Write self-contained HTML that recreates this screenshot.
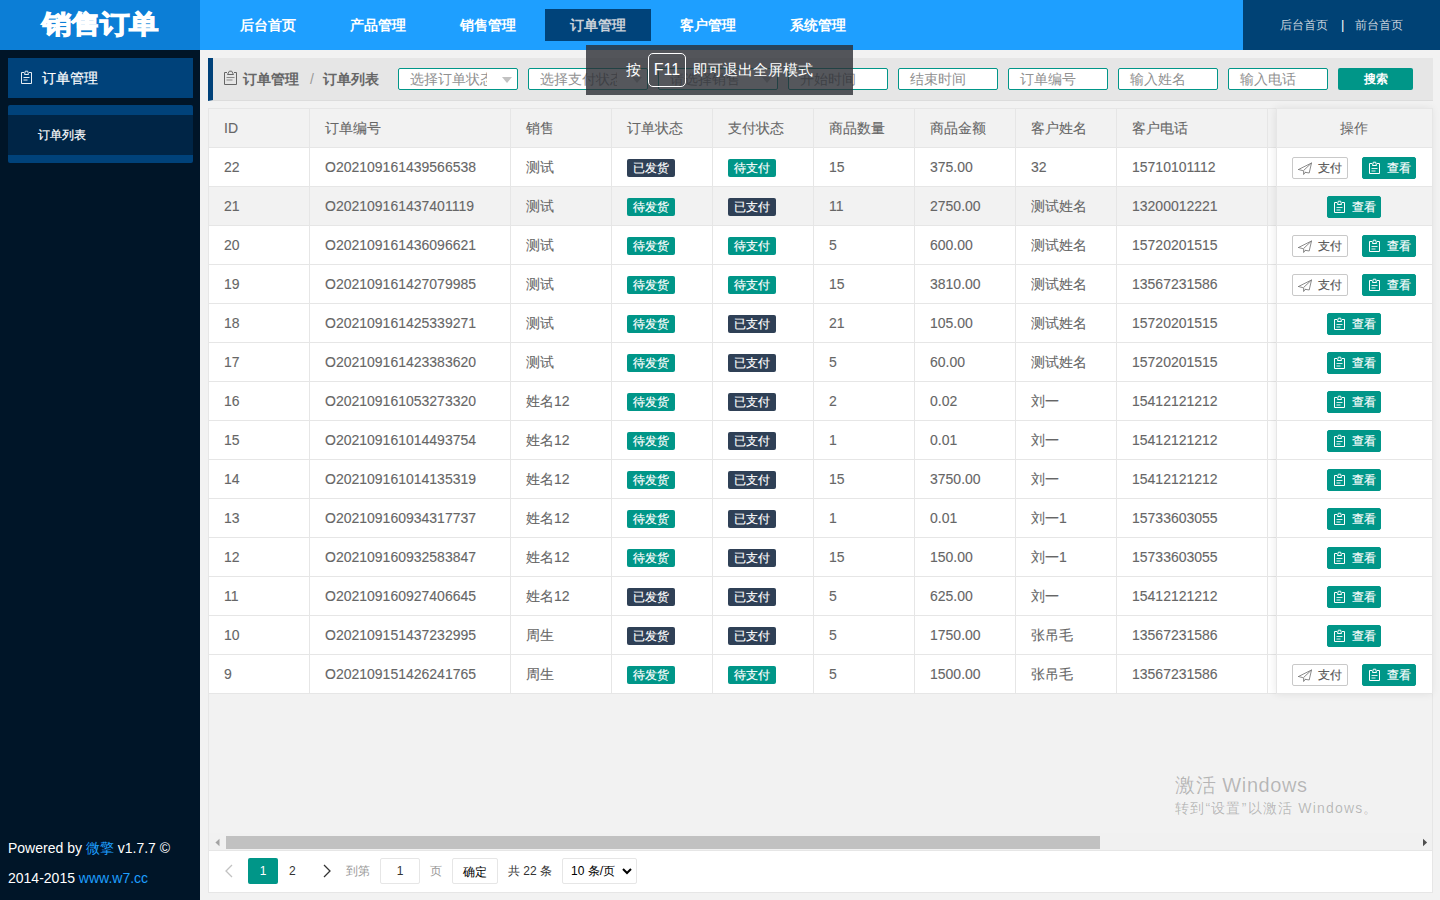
<!DOCTYPE html><html><head><meta charset="utf-8"><style>
*{margin:0;padding:0;box-sizing:border-box}
html,body{width:1440px;height:900px;overflow:hidden;background:#f2f2f2;font-family:"Liberation Sans",sans-serif;font-size:14px;color:#666}
.stk{-webkit-text-stroke:0.3px currentColor}
.abs{position:absolute}
#logo{left:0;top:0;width:200px;height:50px;background:#0c7ed6}
#logot{position:absolute;left:0;top:0;width:200px;height:50px;color:#fff;font-size:29px;font-weight:900;line-height:49px;text-align:center;-webkit-text-stroke:1.2px #fff;transform:scale(1.0,0.88);transform-origin:100px 22px}
#nav{left:200px;top:0;width:1043px;height:50px;background:#1e9fff}
.nv{position:absolute;top:0;height:50px;line-height:50px;color:#fff;font-weight:bold;font-size:14px;white-space:nowrap}
#navact{left:345px;top:9px;width:106px;height:32px;background:#00437a}
#hright{left:1243px;top:0;width:197px;height:50px;background:#004275;color:#c9d3dd;font-size:12px;line-height:50px}
#side{left:0;top:50px;width:200px;height:850px;background:#001528}
.sitem{-webkit-text-stroke:0.2px #fff;position:absolute;left:8px;width:185px;background:#00427a;color:#fff}
#foot{left:8px;top:833px;color:#fff;font-size:14px;line-height:30px;white-space:nowrap}
#foot a{color:#1e9fff;text-decoration:none}
#crumb{left:208px;top:58px;width:1225px;height:43px;background:#e6e6e6;border-left:5px solid #00427a;border-bottom:1px solid #dcdcdc}
.inp{position:absolute;top:68px;height:22px;background:#fff;border:1px solid #009688;border-radius:2px;color:#909090;font-size:14px;line-height:20px;padding-left:11px;white-space:nowrap;overflow:hidden}
.tri{position:absolute;right:5px;top:8px;width:0;height:0;border-left:5.5px solid transparent;border-right:5.5px solid transparent;border-top:6px solid #c2c2c2}
#sbtn{left:1338px;top:68px;width:75px;height:22px;background:#009688;border-radius:2px;color:#fff;font-weight:bold;font-size:12px;line-height:22px;text-align:center}
#tbl{left:208px;top:108px;width:1225px;height:785px;border:1px solid #e6e6e6;background:#f2f2f2}
.row{position:absolute;left:209px;width:1223px;height:38px;background:#fff}
.hline{position:absolute;left:208px;width:1225px;height:1px;background:#e6e6e6}
.vline{position:absolute;width:1px;background:#e6e6e6}
.cell{-webkit-text-stroke:0.1px #666;position:absolute;height:38px;line-height:38px;white-space:nowrap;color:#666;font-size:14px}
.tag{-webkit-text-stroke:0.15px #fff;display:inline-block;height:18px;line-height:18px;padding:0 6px;border-radius:2px;color:#fff;font-size:12px;vertical-align:middle;position:relative;top:0px}
.tg{background:#009688}.td{background:#2f4056}
#fixed{left:1276px;top:108px;width:157px;height:586px;box-shadow:-1px 0 8px rgba(0,0,0,.08)}
.btn{-webkit-text-stroke:0.15px currentColor;position:absolute;top:9px;height:22px;line-height:20px;border-radius:2px;font-size:12px;white-space:nowrap}
.bpay{border:1px solid #c9c9c9;background:#fff;color:#555;width:56px}
.bview{background:#009688;color:#fff;width:54px;border:1px solid #009688}
#pager{left:209px;top:850px;width:1223px;height:42px;background:#fff;border-top:1px solid #e6e6e6}
.pg{position:absolute;top:7px;height:26px;line-height:26px;font-size:12px;white-space:nowrap}
#toast{left:586px;top:45px;width:267px;height:50px;background:rgba(42,45,51,.8);color:#fff;font-size:15px}
#wm{left:1175px;top:772px;color:rgba(0,0,0,.25);white-space:nowrap}
</style></head><body>
<div id="logo" class="abs"><div id="logot">销售订单</div></div>
<div id="nav" class="abs">
<div id="navact" class="abs"></div>
<div class="nv" style="left:40px;color:#fff">后台首页</div>
<div class="nv" style="left:150px;color:#fff">产品管理</div>
<div class="nv" style="left:260px;color:#fff">销售管理</div>
<div class="nv" style="left:370px;color:#c8d0d8">订单管理</div>
<div class="nv" style="left:480px;color:#fff">客户管理</div>
<div class="nv" style="left:590px;color:#fff">系统管理</div>
</div>
<div id="hright" class="abs"><span class="abs" style="left:37px">后台首页</span><span class="abs" style="left:98px;color:#fff;font-size:13px">|</span><span class="abs" style="left:112px">前台首页</span></div>
<div id="side" class="abs">
<div class="sitem" style="top:8px;height:40px;line-height:40px;font-size:14px"><svg style="position:absolute;left:13px;top:14px;overflow:visible" width="11" height="12" viewBox="0 0 11 12"><path d="M3 0.5H0.5V11.5H10.5V0.5H8" fill="none" stroke="#e8eef4" stroke-width="1.0"/><path d="M3.5 2.5L4.3 -0.8H6.7L7.5 2.5Z" fill="none" stroke="#e8eef4" stroke-width="1.0" stroke-linejoin="round"/><path d="M2.5 5.5H8.5M2.5 8H6.5" fill="none" stroke="#e8eef4" stroke-width="1.0"/></svg><span class="abs" style="left:34px">订单管理</span></div>
<div class="sitem" style="top:55px;height:58px;border-radius:2px"><div class="abs" style="left:0;top:10px;width:185px;height:40px;background:#002546"></div><span class="abs" style="left:30px;top:10px;line-height:40px;font-size:12px">订单列表</span></div>
</div>
<div id="foot" class="abs">Powered by <a>微擎</a> v1.7.7 ©<br>2014-2015 <a>www.w7.cc</a></div>
<div id="crumb" class="abs">
<svg style="position:absolute;left:11px;top:14px;overflow:visible" width="13" height="13" viewBox="0 0 13 13"><path d="M3 0.5H0.5V12.5H12.5V0.5H10" fill="none" stroke="#666" stroke-width="1.0"/><path d="M3.5 2.5L5.3 -0.8H7.7L9.5 2.5Z" fill="none" stroke="#666" stroke-width="1.0" stroke-linejoin="round"/><path d="M2.5 5.5H10.5M2.5 8H8.5" fill="none" stroke="#888" stroke-width="1.0"/></svg>
<span class="abs" style="left:30px;top:0;line-height:42px;font-weight:bold;color:#666">订单管理</span>
<span class="abs" style="left:97px;top:0;line-height:42px;color:#999">/</span>
<span class="abs" style="left:110px;top:0;line-height:42px;font-weight:bold;color:#666">订单列表</span>
</div>
<div class="inp" style="left:398px;width:120px"><span class="abs" style="left:11px;width:77px;overflow:hidden">选择订单状态</span><i class="tri"></i></div>
<div class="inp" style="left:528px;width:120px"><span class="abs" style="left:11px;width:77px;overflow:hidden">选择支付状态</span><i class="tri"></i></div>
<div class="inp" style="left:658px;width:120px"><span class="abs" style="left:11px;width:77px;overflow:hidden">请选择销售</span><i class="tri"></i></div>
<div class="inp" style="left:788px;width:100px">开始时间</div>
<div class="inp" style="left:898px;width:100px">结束时间</div>
<div class="inp" style="left:1008px;width:100px">订单编号</div>
<div class="inp" style="left:1118px;width:100px">输入姓名</div>
<div class="inp" style="left:1228px;width:100px">输入电话</div>
<div id="sbtn" class="abs">搜索</div>
<div id="tbl" class="abs"></div>
<div class="row" style="top:109px;background:#f2f2f2"></div>
<div class="row" style="top:148px;background:#fff"></div>
<div class="row" style="top:187px;background:#f2f2f2"></div>
<div class="row" style="top:226px;background:#fff"></div>
<div class="row" style="top:265px;background:#fff"></div>
<div class="row" style="top:304px;background:#fff"></div>
<div class="row" style="top:343px;background:#fff"></div>
<div class="row" style="top:382px;background:#fff"></div>
<div class="row" style="top:421px;background:#fff"></div>
<div class="row" style="top:460px;background:#fff"></div>
<div class="row" style="top:499px;background:#fff"></div>
<div class="row" style="top:538px;background:#fff"></div>
<div class="row" style="top:577px;background:#fff"></div>
<div class="row" style="top:616px;background:#fff"></div>
<div class="row" style="top:655px;background:#fff"></div>
<div class="hline" style="top:147px"></div>
<div class="hline" style="top:186px"></div>
<div class="hline" style="top:225px"></div>
<div class="hline" style="top:264px"></div>
<div class="hline" style="top:303px"></div>
<div class="hline" style="top:342px"></div>
<div class="hline" style="top:381px"></div>
<div class="hline" style="top:420px"></div>
<div class="hline" style="top:459px"></div>
<div class="hline" style="top:498px"></div>
<div class="hline" style="top:537px"></div>
<div class="hline" style="top:576px"></div>
<div class="hline" style="top:615px"></div>
<div class="hline" style="top:654px"></div>
<div class="hline" style="top:693px"></div>
<div class="vline" style="left:309px;top:108px;height:586px"></div>
<div class="vline" style="left:510px;top:108px;height:586px"></div>
<div class="vline" style="left:611px;top:108px;height:586px"></div>
<div class="vline" style="left:712px;top:108px;height:586px"></div>
<div class="vline" style="left:813px;top:108px;height:586px"></div>
<div class="vline" style="left:914px;top:108px;height:586px"></div>
<div class="vline" style="left:1015px;top:108px;height:586px"></div>
<div class="vline" style="left:1116px;top:108px;height:586px"></div>
<div class="vline" style="left:1267px;top:108px;height:586px"></div>
<div class="cell" style="left:224px;top:109px">ID</div>
<div class="cell" style="left:325px;top:109px">订单编号</div>
<div class="cell" style="left:526px;top:109px">销售</div>
<div class="cell" style="left:627px;top:109px">订单状态</div>
<div class="cell" style="left:728px;top:109px">支付状态</div>
<div class="cell" style="left:829px;top:109px">商品数量</div>
<div class="cell" style="left:930px;top:109px">商品金额</div>
<div class="cell" style="left:1031px;top:109px">客户姓名</div>
<div class="cell" style="left:1132px;top:109px">客户电话</div>
<div class="cell" style="left:224px;top:148px">22</div>
<div class="cell" style="left:325px;top:148px">O202109161439566538</div>
<div class="cell" style="left:526px;top:148px">测试</div>
<div class="cell" style="left:627px;top:148px"><span class="tag td">已发货</span></div>
<div class="cell" style="left:728px;top:148px"><span class="tag tg">待支付</span></div>
<div class="cell" style="left:829px;top:148px">15</div>
<div class="cell" style="left:930px;top:148px">375.00</div>
<div class="cell" style="left:1031px;top:148px">32</div>
<div class="cell" style="left:1132px;top:148px">15710101112</div>
<div class="cell" style="left:224px;top:187px">21</div>
<div class="cell" style="left:325px;top:187px">O202109161437401119</div>
<div class="cell" style="left:526px;top:187px">测试</div>
<div class="cell" style="left:627px;top:187px"><span class="tag tg">待发货</span></div>
<div class="cell" style="left:728px;top:187px"><span class="tag td">已支付</span></div>
<div class="cell" style="left:829px;top:187px">11</div>
<div class="cell" style="left:930px;top:187px">2750.00</div>
<div class="cell" style="left:1031px;top:187px">测试姓名</div>
<div class="cell" style="left:1132px;top:187px">13200012221</div>
<div class="cell" style="left:224px;top:226px">20</div>
<div class="cell" style="left:325px;top:226px">O202109161436096621</div>
<div class="cell" style="left:526px;top:226px">测试</div>
<div class="cell" style="left:627px;top:226px"><span class="tag tg">待发货</span></div>
<div class="cell" style="left:728px;top:226px"><span class="tag tg">待支付</span></div>
<div class="cell" style="left:829px;top:226px">5</div>
<div class="cell" style="left:930px;top:226px">600.00</div>
<div class="cell" style="left:1031px;top:226px">测试姓名</div>
<div class="cell" style="left:1132px;top:226px">15720201515</div>
<div class="cell" style="left:224px;top:265px">19</div>
<div class="cell" style="left:325px;top:265px">O202109161427079985</div>
<div class="cell" style="left:526px;top:265px">测试</div>
<div class="cell" style="left:627px;top:265px"><span class="tag tg">待发货</span></div>
<div class="cell" style="left:728px;top:265px"><span class="tag tg">待支付</span></div>
<div class="cell" style="left:829px;top:265px">15</div>
<div class="cell" style="left:930px;top:265px">3810.00</div>
<div class="cell" style="left:1031px;top:265px">测试姓名</div>
<div class="cell" style="left:1132px;top:265px">13567231586</div>
<div class="cell" style="left:224px;top:304px">18</div>
<div class="cell" style="left:325px;top:304px">O202109161425339271</div>
<div class="cell" style="left:526px;top:304px">测试</div>
<div class="cell" style="left:627px;top:304px"><span class="tag tg">待发货</span></div>
<div class="cell" style="left:728px;top:304px"><span class="tag td">已支付</span></div>
<div class="cell" style="left:829px;top:304px">21</div>
<div class="cell" style="left:930px;top:304px">105.00</div>
<div class="cell" style="left:1031px;top:304px">测试姓名</div>
<div class="cell" style="left:1132px;top:304px">15720201515</div>
<div class="cell" style="left:224px;top:343px">17</div>
<div class="cell" style="left:325px;top:343px">O202109161423383620</div>
<div class="cell" style="left:526px;top:343px">测试</div>
<div class="cell" style="left:627px;top:343px"><span class="tag tg">待发货</span></div>
<div class="cell" style="left:728px;top:343px"><span class="tag td">已支付</span></div>
<div class="cell" style="left:829px;top:343px">5</div>
<div class="cell" style="left:930px;top:343px">60.00</div>
<div class="cell" style="left:1031px;top:343px">测试姓名</div>
<div class="cell" style="left:1132px;top:343px">15720201515</div>
<div class="cell" style="left:224px;top:382px">16</div>
<div class="cell" style="left:325px;top:382px">O202109161053273320</div>
<div class="cell" style="left:526px;top:382px">姓名12</div>
<div class="cell" style="left:627px;top:382px"><span class="tag tg">待发货</span></div>
<div class="cell" style="left:728px;top:382px"><span class="tag td">已支付</span></div>
<div class="cell" style="left:829px;top:382px">2</div>
<div class="cell" style="left:930px;top:382px">0.02</div>
<div class="cell" style="left:1031px;top:382px">刘一</div>
<div class="cell" style="left:1132px;top:382px">15412121212</div>
<div class="cell" style="left:224px;top:421px">15</div>
<div class="cell" style="left:325px;top:421px">O202109161014493754</div>
<div class="cell" style="left:526px;top:421px">姓名12</div>
<div class="cell" style="left:627px;top:421px"><span class="tag tg">待发货</span></div>
<div class="cell" style="left:728px;top:421px"><span class="tag td">已支付</span></div>
<div class="cell" style="left:829px;top:421px">1</div>
<div class="cell" style="left:930px;top:421px">0.01</div>
<div class="cell" style="left:1031px;top:421px">刘一</div>
<div class="cell" style="left:1132px;top:421px">15412121212</div>
<div class="cell" style="left:224px;top:460px">14</div>
<div class="cell" style="left:325px;top:460px">O202109161014135319</div>
<div class="cell" style="left:526px;top:460px">姓名12</div>
<div class="cell" style="left:627px;top:460px"><span class="tag tg">待发货</span></div>
<div class="cell" style="left:728px;top:460px"><span class="tag td">已支付</span></div>
<div class="cell" style="left:829px;top:460px">15</div>
<div class="cell" style="left:930px;top:460px">3750.00</div>
<div class="cell" style="left:1031px;top:460px">刘一</div>
<div class="cell" style="left:1132px;top:460px">15412121212</div>
<div class="cell" style="left:224px;top:499px">13</div>
<div class="cell" style="left:325px;top:499px">O202109160934317737</div>
<div class="cell" style="left:526px;top:499px">姓名12</div>
<div class="cell" style="left:627px;top:499px"><span class="tag tg">待发货</span></div>
<div class="cell" style="left:728px;top:499px"><span class="tag td">已支付</span></div>
<div class="cell" style="left:829px;top:499px">1</div>
<div class="cell" style="left:930px;top:499px">0.01</div>
<div class="cell" style="left:1031px;top:499px">刘一1</div>
<div class="cell" style="left:1132px;top:499px">15733603055</div>
<div class="cell" style="left:224px;top:538px">12</div>
<div class="cell" style="left:325px;top:538px">O202109160932583847</div>
<div class="cell" style="left:526px;top:538px">姓名12</div>
<div class="cell" style="left:627px;top:538px"><span class="tag tg">待发货</span></div>
<div class="cell" style="left:728px;top:538px"><span class="tag td">已支付</span></div>
<div class="cell" style="left:829px;top:538px">15</div>
<div class="cell" style="left:930px;top:538px">150.00</div>
<div class="cell" style="left:1031px;top:538px">刘一1</div>
<div class="cell" style="left:1132px;top:538px">15733603055</div>
<div class="cell" style="left:224px;top:577px">11</div>
<div class="cell" style="left:325px;top:577px">O202109160927406645</div>
<div class="cell" style="left:526px;top:577px">姓名12</div>
<div class="cell" style="left:627px;top:577px"><span class="tag td">已发货</span></div>
<div class="cell" style="left:728px;top:577px"><span class="tag td">已支付</span></div>
<div class="cell" style="left:829px;top:577px">5</div>
<div class="cell" style="left:930px;top:577px">625.00</div>
<div class="cell" style="left:1031px;top:577px">刘一</div>
<div class="cell" style="left:1132px;top:577px">15412121212</div>
<div class="cell" style="left:224px;top:616px">10</div>
<div class="cell" style="left:325px;top:616px">O202109151437232995</div>
<div class="cell" style="left:526px;top:616px">周生</div>
<div class="cell" style="left:627px;top:616px"><span class="tag td">已发货</span></div>
<div class="cell" style="left:728px;top:616px"><span class="tag td">已支付</span></div>
<div class="cell" style="left:829px;top:616px">5</div>
<div class="cell" style="left:930px;top:616px">1750.00</div>
<div class="cell" style="left:1031px;top:616px">张吊毛</div>
<div class="cell" style="left:1132px;top:616px">13567231586</div>
<div class="cell" style="left:224px;top:655px">9</div>
<div class="cell" style="left:325px;top:655px">O202109151426241765</div>
<div class="cell" style="left:526px;top:655px">周生</div>
<div class="cell" style="left:627px;top:655px"><span class="tag tg">待发货</span></div>
<div class="cell" style="left:728px;top:655px"><span class="tag tg">待支付</span></div>
<div class="cell" style="left:829px;top:655px">5</div>
<div class="cell" style="left:930px;top:655px">1500.00</div>
<div class="cell" style="left:1031px;top:655px">张吊毛</div>
<div class="cell" style="left:1132px;top:655px">13567231586</div>
<div id="fixed" class="abs">
<div class="abs" style="left:0;top:1px;width:156px;height:38px;background:#f2f2f2;border-left:1px solid #e6e6e6"></div>
<div class="abs" style="left:0;top:8px;width:156px;line-height:24px;text-align:center;font-size:14px;color:#666">操作</div>
<div class="abs" style="left:0;top:40px;width:156px;height:38px;background:#fff;border-left:1px solid #e6e6e6">
<div class="btn bpay" style="left:15px"><svg style="position:absolute;left:1px;top:0px;overflow:visible" width="20" height="20" viewBox="0 0 20 20"><path d="M4.5 11.5L17.5 5L15.2 15L11.2 14.3M4.5 11.5L8.6 12.6M17.5 5L9.6 12.5V16.5L11.4 14.3" fill="none" stroke="#777" stroke-width="0.85" stroke-linejoin="round" stroke-linecap="round"/></svg><span class="abs" style="left:25px;top:0">支付</span></div>
<div class="btn bview" style="left:85px"><svg style="position:absolute;left:6px;top:5px;overflow:visible" width="11" height="11" viewBox="0 0 11 11"><path d="M3 0.5H0.5V10.5H10.5V0.5H8" fill="none" stroke="#fff" stroke-width="1.0"/><path d="M3.5 2.5L4.3 -0.8H6.7L7.5 2.5Z" fill="none" stroke="#fff" stroke-width="1.0" stroke-linejoin="round"/><path d="M2.5 5.5H8.5M2.5 8H6.5" fill="none" stroke="#e0f0ee" stroke-width="1.0"/></svg><span class="abs" style="left:24px;top:0">查看</span></div>
</div>
<div class="abs" style="left:0;top:78px;width:156px;height:1px;background:#e6e6e6"></div>
<div class="abs" style="left:0;top:79px;width:156px;height:38px;background:#f2f2f2;border-left:1px solid #e6e6e6">
<div class="btn bview" style="left:50px"><svg style="position:absolute;left:6px;top:5px;overflow:visible" width="11" height="11" viewBox="0 0 11 11"><path d="M3 0.5H0.5V10.5H10.5V0.5H8" fill="none" stroke="#fff" stroke-width="1.0"/><path d="M3.5 2.5L4.3 -0.8H6.7L7.5 2.5Z" fill="none" stroke="#fff" stroke-width="1.0" stroke-linejoin="round"/><path d="M2.5 5.5H8.5M2.5 8H6.5" fill="none" stroke="#e0f0ee" stroke-width="1.0"/></svg><span class="abs" style="left:24px;top:0">查看</span></div>
</div>
<div class="abs" style="left:0;top:117px;width:156px;height:1px;background:#e6e6e6"></div>
<div class="abs" style="left:0;top:118px;width:156px;height:38px;background:#fff;border-left:1px solid #e6e6e6">
<div class="btn bpay" style="left:15px"><svg style="position:absolute;left:1px;top:0px;overflow:visible" width="20" height="20" viewBox="0 0 20 20"><path d="M4.5 11.5L17.5 5L15.2 15L11.2 14.3M4.5 11.5L8.6 12.6M17.5 5L9.6 12.5V16.5L11.4 14.3" fill="none" stroke="#777" stroke-width="0.85" stroke-linejoin="round" stroke-linecap="round"/></svg><span class="abs" style="left:25px;top:0">支付</span></div>
<div class="btn bview" style="left:85px"><svg style="position:absolute;left:6px;top:5px;overflow:visible" width="11" height="11" viewBox="0 0 11 11"><path d="M3 0.5H0.5V10.5H10.5V0.5H8" fill="none" stroke="#fff" stroke-width="1.0"/><path d="M3.5 2.5L4.3 -0.8H6.7L7.5 2.5Z" fill="none" stroke="#fff" stroke-width="1.0" stroke-linejoin="round"/><path d="M2.5 5.5H8.5M2.5 8H6.5" fill="none" stroke="#e0f0ee" stroke-width="1.0"/></svg><span class="abs" style="left:24px;top:0">查看</span></div>
</div>
<div class="abs" style="left:0;top:156px;width:156px;height:1px;background:#e6e6e6"></div>
<div class="abs" style="left:0;top:157px;width:156px;height:38px;background:#fff;border-left:1px solid #e6e6e6">
<div class="btn bpay" style="left:15px"><svg style="position:absolute;left:1px;top:0px;overflow:visible" width="20" height="20" viewBox="0 0 20 20"><path d="M4.5 11.5L17.5 5L15.2 15L11.2 14.3M4.5 11.5L8.6 12.6M17.5 5L9.6 12.5V16.5L11.4 14.3" fill="none" stroke="#777" stroke-width="0.85" stroke-linejoin="round" stroke-linecap="round"/></svg><span class="abs" style="left:25px;top:0">支付</span></div>
<div class="btn bview" style="left:85px"><svg style="position:absolute;left:6px;top:5px;overflow:visible" width="11" height="11" viewBox="0 0 11 11"><path d="M3 0.5H0.5V10.5H10.5V0.5H8" fill="none" stroke="#fff" stroke-width="1.0"/><path d="M3.5 2.5L4.3 -0.8H6.7L7.5 2.5Z" fill="none" stroke="#fff" stroke-width="1.0" stroke-linejoin="round"/><path d="M2.5 5.5H8.5M2.5 8H6.5" fill="none" stroke="#e0f0ee" stroke-width="1.0"/></svg><span class="abs" style="left:24px;top:0">查看</span></div>
</div>
<div class="abs" style="left:0;top:195px;width:156px;height:1px;background:#e6e6e6"></div>
<div class="abs" style="left:0;top:196px;width:156px;height:38px;background:#fff;border-left:1px solid #e6e6e6">
<div class="btn bview" style="left:50px"><svg style="position:absolute;left:6px;top:5px;overflow:visible" width="11" height="11" viewBox="0 0 11 11"><path d="M3 0.5H0.5V10.5H10.5V0.5H8" fill="none" stroke="#fff" stroke-width="1.0"/><path d="M3.5 2.5L4.3 -0.8H6.7L7.5 2.5Z" fill="none" stroke="#fff" stroke-width="1.0" stroke-linejoin="round"/><path d="M2.5 5.5H8.5M2.5 8H6.5" fill="none" stroke="#e0f0ee" stroke-width="1.0"/></svg><span class="abs" style="left:24px;top:0">查看</span></div>
</div>
<div class="abs" style="left:0;top:234px;width:156px;height:1px;background:#e6e6e6"></div>
<div class="abs" style="left:0;top:235px;width:156px;height:38px;background:#fff;border-left:1px solid #e6e6e6">
<div class="btn bview" style="left:50px"><svg style="position:absolute;left:6px;top:5px;overflow:visible" width="11" height="11" viewBox="0 0 11 11"><path d="M3 0.5H0.5V10.5H10.5V0.5H8" fill="none" stroke="#fff" stroke-width="1.0"/><path d="M3.5 2.5L4.3 -0.8H6.7L7.5 2.5Z" fill="none" stroke="#fff" stroke-width="1.0" stroke-linejoin="round"/><path d="M2.5 5.5H8.5M2.5 8H6.5" fill="none" stroke="#e0f0ee" stroke-width="1.0"/></svg><span class="abs" style="left:24px;top:0">查看</span></div>
</div>
<div class="abs" style="left:0;top:273px;width:156px;height:1px;background:#e6e6e6"></div>
<div class="abs" style="left:0;top:274px;width:156px;height:38px;background:#fff;border-left:1px solid #e6e6e6">
<div class="btn bview" style="left:50px"><svg style="position:absolute;left:6px;top:5px;overflow:visible" width="11" height="11" viewBox="0 0 11 11"><path d="M3 0.5H0.5V10.5H10.5V0.5H8" fill="none" stroke="#fff" stroke-width="1.0"/><path d="M3.5 2.5L4.3 -0.8H6.7L7.5 2.5Z" fill="none" stroke="#fff" stroke-width="1.0" stroke-linejoin="round"/><path d="M2.5 5.5H8.5M2.5 8H6.5" fill="none" stroke="#e0f0ee" stroke-width="1.0"/></svg><span class="abs" style="left:24px;top:0">查看</span></div>
</div>
<div class="abs" style="left:0;top:312px;width:156px;height:1px;background:#e6e6e6"></div>
<div class="abs" style="left:0;top:313px;width:156px;height:38px;background:#fff;border-left:1px solid #e6e6e6">
<div class="btn bview" style="left:50px"><svg style="position:absolute;left:6px;top:5px;overflow:visible" width="11" height="11" viewBox="0 0 11 11"><path d="M3 0.5H0.5V10.5H10.5V0.5H8" fill="none" stroke="#fff" stroke-width="1.0"/><path d="M3.5 2.5L4.3 -0.8H6.7L7.5 2.5Z" fill="none" stroke="#fff" stroke-width="1.0" stroke-linejoin="round"/><path d="M2.5 5.5H8.5M2.5 8H6.5" fill="none" stroke="#e0f0ee" stroke-width="1.0"/></svg><span class="abs" style="left:24px;top:0">查看</span></div>
</div>
<div class="abs" style="left:0;top:351px;width:156px;height:1px;background:#e6e6e6"></div>
<div class="abs" style="left:0;top:352px;width:156px;height:38px;background:#fff;border-left:1px solid #e6e6e6">
<div class="btn bview" style="left:50px"><svg style="position:absolute;left:6px;top:5px;overflow:visible" width="11" height="11" viewBox="0 0 11 11"><path d="M3 0.5H0.5V10.5H10.5V0.5H8" fill="none" stroke="#fff" stroke-width="1.0"/><path d="M3.5 2.5L4.3 -0.8H6.7L7.5 2.5Z" fill="none" stroke="#fff" stroke-width="1.0" stroke-linejoin="round"/><path d="M2.5 5.5H8.5M2.5 8H6.5" fill="none" stroke="#e0f0ee" stroke-width="1.0"/></svg><span class="abs" style="left:24px;top:0">查看</span></div>
</div>
<div class="abs" style="left:0;top:390px;width:156px;height:1px;background:#e6e6e6"></div>
<div class="abs" style="left:0;top:391px;width:156px;height:38px;background:#fff;border-left:1px solid #e6e6e6">
<div class="btn bview" style="left:50px"><svg style="position:absolute;left:6px;top:5px;overflow:visible" width="11" height="11" viewBox="0 0 11 11"><path d="M3 0.5H0.5V10.5H10.5V0.5H8" fill="none" stroke="#fff" stroke-width="1.0"/><path d="M3.5 2.5L4.3 -0.8H6.7L7.5 2.5Z" fill="none" stroke="#fff" stroke-width="1.0" stroke-linejoin="round"/><path d="M2.5 5.5H8.5M2.5 8H6.5" fill="none" stroke="#e0f0ee" stroke-width="1.0"/></svg><span class="abs" style="left:24px;top:0">查看</span></div>
</div>
<div class="abs" style="left:0;top:429px;width:156px;height:1px;background:#e6e6e6"></div>
<div class="abs" style="left:0;top:430px;width:156px;height:38px;background:#fff;border-left:1px solid #e6e6e6">
<div class="btn bview" style="left:50px"><svg style="position:absolute;left:6px;top:5px;overflow:visible" width="11" height="11" viewBox="0 0 11 11"><path d="M3 0.5H0.5V10.5H10.5V0.5H8" fill="none" stroke="#fff" stroke-width="1.0"/><path d="M3.5 2.5L4.3 -0.8H6.7L7.5 2.5Z" fill="none" stroke="#fff" stroke-width="1.0" stroke-linejoin="round"/><path d="M2.5 5.5H8.5M2.5 8H6.5" fill="none" stroke="#e0f0ee" stroke-width="1.0"/></svg><span class="abs" style="left:24px;top:0">查看</span></div>
</div>
<div class="abs" style="left:0;top:468px;width:156px;height:1px;background:#e6e6e6"></div>
<div class="abs" style="left:0;top:469px;width:156px;height:38px;background:#fff;border-left:1px solid #e6e6e6">
<div class="btn bview" style="left:50px"><svg style="position:absolute;left:6px;top:5px;overflow:visible" width="11" height="11" viewBox="0 0 11 11"><path d="M3 0.5H0.5V10.5H10.5V0.5H8" fill="none" stroke="#fff" stroke-width="1.0"/><path d="M3.5 2.5L4.3 -0.8H6.7L7.5 2.5Z" fill="none" stroke="#fff" stroke-width="1.0" stroke-linejoin="round"/><path d="M2.5 5.5H8.5M2.5 8H6.5" fill="none" stroke="#e0f0ee" stroke-width="1.0"/></svg><span class="abs" style="left:24px;top:0">查看</span></div>
</div>
<div class="abs" style="left:0;top:507px;width:156px;height:1px;background:#e6e6e6"></div>
<div class="abs" style="left:0;top:508px;width:156px;height:38px;background:#fff;border-left:1px solid #e6e6e6">
<div class="btn bview" style="left:50px"><svg style="position:absolute;left:6px;top:5px;overflow:visible" width="11" height="11" viewBox="0 0 11 11"><path d="M3 0.5H0.5V10.5H10.5V0.5H8" fill="none" stroke="#fff" stroke-width="1.0"/><path d="M3.5 2.5L4.3 -0.8H6.7L7.5 2.5Z" fill="none" stroke="#fff" stroke-width="1.0" stroke-linejoin="round"/><path d="M2.5 5.5H8.5M2.5 8H6.5" fill="none" stroke="#e0f0ee" stroke-width="1.0"/></svg><span class="abs" style="left:24px;top:0">查看</span></div>
</div>
<div class="abs" style="left:0;top:546px;width:156px;height:1px;background:#e6e6e6"></div>
<div class="abs" style="left:0;top:547px;width:156px;height:38px;background:#fff;border-left:1px solid #e6e6e6">
<div class="btn bpay" style="left:15px"><svg style="position:absolute;left:1px;top:0px;overflow:visible" width="20" height="20" viewBox="0 0 20 20"><path d="M4.5 11.5L17.5 5L15.2 15L11.2 14.3M4.5 11.5L8.6 12.6M17.5 5L9.6 12.5V16.5L11.4 14.3" fill="none" stroke="#777" stroke-width="0.85" stroke-linejoin="round" stroke-linecap="round"/></svg><span class="abs" style="left:25px;top:0">支付</span></div>
<div class="btn bview" style="left:85px"><svg style="position:absolute;left:6px;top:5px;overflow:visible" width="11" height="11" viewBox="0 0 11 11"><path d="M3 0.5H0.5V10.5H10.5V0.5H8" fill="none" stroke="#fff" stroke-width="1.0"/><path d="M3.5 2.5L4.3 -0.8H6.7L7.5 2.5Z" fill="none" stroke="#fff" stroke-width="1.0" stroke-linejoin="round"/><path d="M2.5 5.5H8.5M2.5 8H6.5" fill="none" stroke="#e0f0ee" stroke-width="1.0"/></svg><span class="abs" style="left:24px;top:0">查看</span></div>
</div>
<div class="abs" style="left:0;top:585px;width:156px;height:1px;background:#e6e6e6"></div>
</div>
<div class="abs" style="left:209px;top:833px;width:1223px;height:17px;background:#f1f1f1"></div>
<div class="abs" style="left:226px;top:836px;width:874px;height:13px;background:#c1c1c1"></div>
<svg class="abs" style="left:210px;top:833px" width="16" height="17" viewBox="0 0 16 17"><path d="M9.5 5.8V13.2L5.4 9.5Z" fill="#a3a3a3"/></svg>
<svg class="abs" style="left:1416px;top:833px" width="16" height="17" viewBox="0 0 16 17"><path d="M7 5.8V13.2L11.1 9.5Z" fill="#505050"/></svg>
<div id="pager" class="abs">
<svg class="abs" style="left:15px;top:13px" width="10" height="14" viewBox="0 0 10 14"><path d="M8 1L2 7L8 13" fill="none" stroke="#c2c2c2" stroke-width="1.3"/></svg>
<span class="pg" style="left:39px;width:30px;background:#009688;color:#fff;text-align:center;border-radius:2px">1</span>
<span class="pg" style="left:80px;color:#333">2</span>
<svg class="abs" style="left:113px;top:13px" width="10" height="14" viewBox="0 0 10 14"><path d="M2 1L8 7L2 13" fill="none" stroke="#333" stroke-width="1.3"/></svg>
<span class="pg" style="left:137px;color:#999">到第</span>
<span class="pg" style="left:171px;width:40px;border:1px solid #e6e6e6;border-radius:2px;text-align:center;color:#333;line-height:24px">1</span>
<span class="pg" style="left:221px;color:#999">页</span>
<span class="pg" style="left:243px;width:46px;border:1px solid #e6e6e6;border-radius:2px;text-align:center;color:#000;line-height:26px">确定</span>
<span class="pg" style="left:299px;color:#333">共 22 条</span>
<span class="pg" style="left:353px;width:75px;border:1px solid #e6e6e6;border-radius:2px;color:#000;line-height:24px;padding-left:8px">10 条/页</span>
<svg class="abs" style="left:413px;top:17px" width="10" height="7" viewBox="0 0 10 7"><path d="M1 1L5 5L9 1" fill="none" stroke="#000" stroke-width="2"/></svg>
</div>
<div id="wm" class="abs"><div style="font-size:20px;line-height:26px;letter-spacing:0.6px">激活 Windows</div><div style="font-size:14px;line-height:21px;letter-spacing:1.2px">转到“设置”以激活 Windows。</div></div>
<div id="toast" class="abs"><span class="abs" style="left:40px;top:0;line-height:50px">按</span><span class="abs" style="left:62px;top:8px;width:38px;height:34px;border:1.3px solid #fff;border-radius:5px;line-height:32px;text-align:center;font-size:16px">F11</span><span class="abs" style="left:107px;top:0;line-height:50px">即可退出全屏模式</span></div>
</body></html>
